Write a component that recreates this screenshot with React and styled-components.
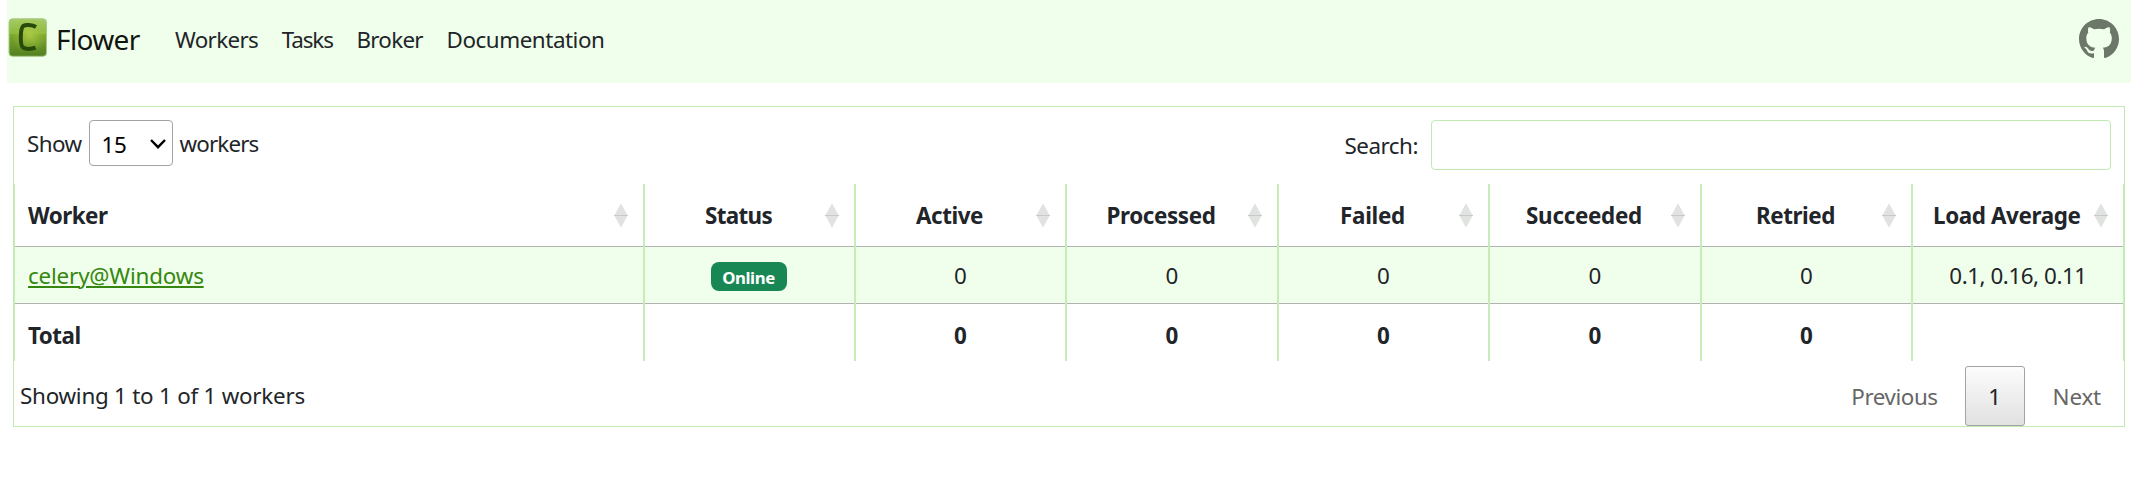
import React from 'react';
import styled, { createGlobalStyle } from 'styled-components';

const GlobalStyle = createGlobalStyle`
  *, *::before, *::after { box-sizing: border-box; }
  body {
    margin: 0;
    background: #fff;
    color: #212529;
    font-family: "Noto Sans", sans-serif;
    font-size: 22.4px;
    line-height: 34px;
  }
`;

const Text = styled.span`
  letter-spacing: ${(p) => p.$track || 0}px;
  white-space: nowrap;
`;

const Navbar = styled.nav`
  display: flex;
  align-items: center;
  height: 83px;
  margin: 0 5px 0 7px;
  padding: 0 12px 5px 1px;
  background: #f0ffeb;
`;

const Brand = styled.a`
  display: flex;
  align-items: center;
  gap: 8px;
  width: 167px;
  color: #101510;
  font-size: 28px;

  svg { margin-top: -4px; }
`;

const NavLinks = styled.div`
  display: flex;
  flex: 1;
  gap: 23.6px;
  padding-top: 2px;
`;

const Panel = styled.main`
  margin: 23px 11px 0 13px;
  height: 321px;
  border: 1px solid #c0eab0;
`;

const Toolbar = styled.div`
  display: flex;
  justify-content: space-between;
  height: 77px;
  padding: 13px 13px 0 13px;
`;

const LengthControl = styled.label`
  display: flex;
  align-items: center;
  height: 46px;
  padding-top: 1px;
`;

const SelectBox = styled.span`
  display: flex;
  align-items: center;
  justify-content: space-between;
  width: 84px;
  height: 46px;
  margin: -1px 7px 0 7px;
  padding: 0 6px 0 12px;
  border: 1px solid #a3a3a3;
  border-radius: 4px;
  color: #000;

  span { padding-top: 3px; }
  svg { margin-top: 1px; }
`;

const SearchControl = styled.label`
  display: flex;
  align-items: center;
  gap: 13px;
  height: 50px;

  span { padding-top: 2px; }
`;

const SearchInput = styled.input`
  width: 680px;
  height: 50px;
  padding: 7px;
  border: 1px solid #c0eab0;
  border-radius: 4px;
  background: transparent;
  font: inherit;
`;

const Table = styled.div`
  display: flex;
  flex-direction: column;
`;

const TableRow = styled.div`
  display: grid;
  grid-template-columns: 631px 211px 211px 212px 211px 212px 211px 211px;
  height: ${(p) => p.$height || 57}px;
  background: ${(p) => (p.$striped ? '#f0ffeb' : 'transparent')};
  font-weight: ${(p) => (p.$bold ? 700 : 400)};
`;

const Cell = styled.div`
  display: flex;
  align-items: center;
  justify-content: center;
  border-right: 2px solid #c7ecb8;
  box-shadow: ${(p) => (p.$line ? 'inset 0 -1px #b0b3ae' : 'none')};
  padding-top: ${(p) => p.$drop || 0}px;

  &:first-child {
    justify-content: flex-start;
    padding-left: 13px;
    border-left: 1px solid #c7ecb8;
  }
  &:last-child { border-right-width: 1px; }
`;

const HeaderLabel = styled.div`
  flex: 1;
  text-align: ${(p) => (p.$left ? 'left' : 'center')};
  padding: ${(p) => (p.$left ? '1px 0 0' : '1px 0 0 7px')};
`;

const SortIcon = styled.svg`
  display: block;
  flex: none;
  width: 14px;
  height: 25px;
  margin-right: ${(p) => (p.$edge ? 15.5 : 15)}px;
`;

const WorkerLink = styled.a`
  color: #35870f;
  text-decoration: underline;
  text-decoration-thickness: 2px;
  text-underline-offset: 2px;
  text-decoration-skip-ink: auto;
`;

const Badge = styled.span`
  display: flex;
  align-items: center;
  justify-content: center;
  width: 76px;
  height: 29px;
  margin: 2px 2px 0 0;
  padding-top: 2px;
  border-radius: 8px;
  background: #198754;
  color: #fff;
  font-size: 16.8px;
  font-weight: 700;
`;

const Footer = styled.div`
  display: flex;
  justify-content: space-between;
  height: 65px;
  padding-left: 6px;
`;

const Info = styled.div`
  padding-top: 18px;
`;

const Pager = styled.div`
  display: flex;
  align-items: center;
  height: 60px;
  margin-top: 4px;
  padding-right: 23px;
  color: #666;
`;

const PageButton = styled.button`
  width: 60px;
  height: 60px;
  margin: 2px 28px 0 27px;
  padding: 1px 0 0;
  border: 1px solid #a3a3a3;
  border-radius: 3px;
  background: linear-gradient(#fcfcfc, #e1e1e1);
  color: #222;
  font: inherit;
`;

const PagerLink = styled.a`
  padding-top: 3px;
`;

const CeleryLogo = () => (
  <svg width="40" height="40" viewBox="0 0 40 40" aria-hidden="true">
    <defs>
      <linearGradient id="tile" x1="0" y1="0" x2="0" y2="1">
        <stop offset="0" stopColor="#a5cb68" />
        <stop offset="0.4" stopColor="#8eb83c" />
        <stop offset="0.42" stopColor="#7da62d" />
        <stop offset="1" stopColor="#528021" />
      </linearGradient>
      <radialGradient id="glow" cx="0.55" cy="0.42" r="0.5">
        <stop offset="0" stopColor="#b2cf45" stopOpacity="0.85" />
        <stop offset="1" stopColor="#9dc03b" stopOpacity="0" />
      </radialGradient>
    </defs>
    <rect x="1" y="1.8" width="37.5" height="37.5" rx="3.5" fill="url(#tile)" stroke="#a9c887" />
    <rect x="1.5" y="2.5" width="36.5" height="36.5" rx="3" fill="url(#glow)" />
    <path
      d="M28 10C24 7.6 17.5 7.6 15.2 9C12.2 11.6 12 27 14.6 30.2C16.8 32.6 24 32.2 27.6 30.6"
      fill="none"
      stroke="#274b0b"
      strokeWidth="4"
      strokeLinejoin="round"
    />
  </svg>
);

const GithubMark = () => (
  <svg width="40" height="40" viewBox="0 0 16 16" fill="#6c7669" aria-hidden="true">
    <path d="M8 0C3.58 0 0 3.58 0 8c0 3.54 2.29 6.53 5.47 7.59.4.07.55-.17.55-.38 0-.19-.01-.82-.01-1.49-2.01.37-2.53-.49-2.69-.94-.09-.23-.48-.94-.82-1.13-.28-.15-.68-.52-.01-.53.63-.01 1.08.58 1.23.82.72 1.21 1.87.87 2.33.66.07-.52.28-.87.51-1.07-1.78-.2-3.64-.89-3.64-3.95 0-.87.31-1.59.82-2.15-.08-.2-.36-1.02.08-2.12 0 0 .67-.21 2.2.82.64-.18 1.32-.27 2-.27.68 0 1.36.09 2 .27 1.53-1.04 2.2-.82 2.2-.82.44 1.1.16 1.92.08 2.12.51.56.82 1.27.82 2.15 0 3.07-1.87 3.75-3.65 3.95.29.25.54.73.54 1.48 0 1.07-.01 1.93-.01 2.2 0 .21.15.46.55.38A8.012 8.012 0 0 0 16 8c0-4.42-3.58-8-8-8z" />
  </svg>
);

const Sort = ({ edge }) => (
  <SortIcon $edge={edge} viewBox="0 0 14 25" aria-hidden="true">
    <path d="M7 0.3L14 13H0Z M0 12H14L7 24.7Z" fill="#e1e3e1" />
    <path d="M0 12.5H14" stroke="#c8caca" />
  </SortIcon>
);

const columns = [
  ['Worker', -0.5],
  ['Status', -0.65],
  ['Active', -0.45],
  ['Processed', -0.4],
  ['Failed', -0.29],
  ['Succeeded', -0.28],
  ['Retried', -0.4],
  ['Load Average', -0.38],
];

const counters = ['active', 'processed', 'failed', 'succeeded', 'retried'];

export default function App() {
  return (
    <>
      <GlobalStyle />
      <Navbar>
        <Brand>
          <CeleryLogo />
          <Text $track={-0.65}>Flower</Text>
        </Brand>
        <NavLinks>
          <Text as="a" $track={-0.67}>Workers</Text>
          <Text as="a" $track={-1.1}>Tasks</Text>
          <Text as="a" $track={-0.7}>Broker</Text>
          <Text as="a" $track={-0.45}>Documentation</Text>
        </NavLinks>
        <GithubMark />
      </Navbar>
      <Panel>
        <Toolbar>
          <LengthControl>
            <Text $track={-0.58}>Show</Text>
            <SelectBox>
              <Text $track={-0.31}>15</Text>
              <svg width="16" height="12" viewBox="0 0 16 12" fill="none" stroke="#000" strokeWidth="2.4">
                <path d="M1 2L8 9.2L15 2" />
              </svg>
            </SelectBox>
            <Text $track={-0.87}>workers</Text>
          </LengthControl>
          <SearchControl>
            <Text $track={-0.48}>Search:</Text>
            <SearchInput aria-label="Search" />
          </SearchControl>
        </Toolbar>
        <Table>
          <TableRow $height={63} $bold>
            {columns.map(([name, track], i) => (
              <Cell key={name} $line>
                <HeaderLabel $left={i === 0}>
                  <Text $track={track}>{name}</Text>
                </HeaderLabel>
                <Sort edge={i === columns.length - 1} />
              </Cell>
            ))}
          </TableRow>
          <TableRow $striped>
            <Cell $line>
              <WorkerLink><Text $track={-0.18}>celery@Windows</Text></WorkerLink>
            </Cell>
            <Cell $line>
              <Badge><Text $track={-0.42}>Online</Text></Badge>
            </Cell>
            {counters.map((id) => <Cell key={id} $line>0</Cell>)}
            <Cell $line><Text $track={-0.45}>0.1, 0.16, 0.11</Text></Cell>
          </TableRow>
          <TableRow $bold>
            <Cell $drop={7}><Text $track={-0.5}>Total</Text></Cell>
            <Cell />
            {counters.map((id) => <Cell key={id} $drop={7}>0</Cell>)}
            <Cell />
          </TableRow>
        </Table>
        <Footer>
          <Info><Text $track={-0.24}>Showing 1 to 1 of 1 workers</Text></Info>
          <Pager>
            <PagerLink><Text $track={-0.44}>Previous</Text></PagerLink>
            <PageButton>1</PageButton>
            <PagerLink><Text $track={-0.18}>Next</Text></PagerLink>
          </Pager>
        </Footer>
      </Panel>
    </>
  );
}
